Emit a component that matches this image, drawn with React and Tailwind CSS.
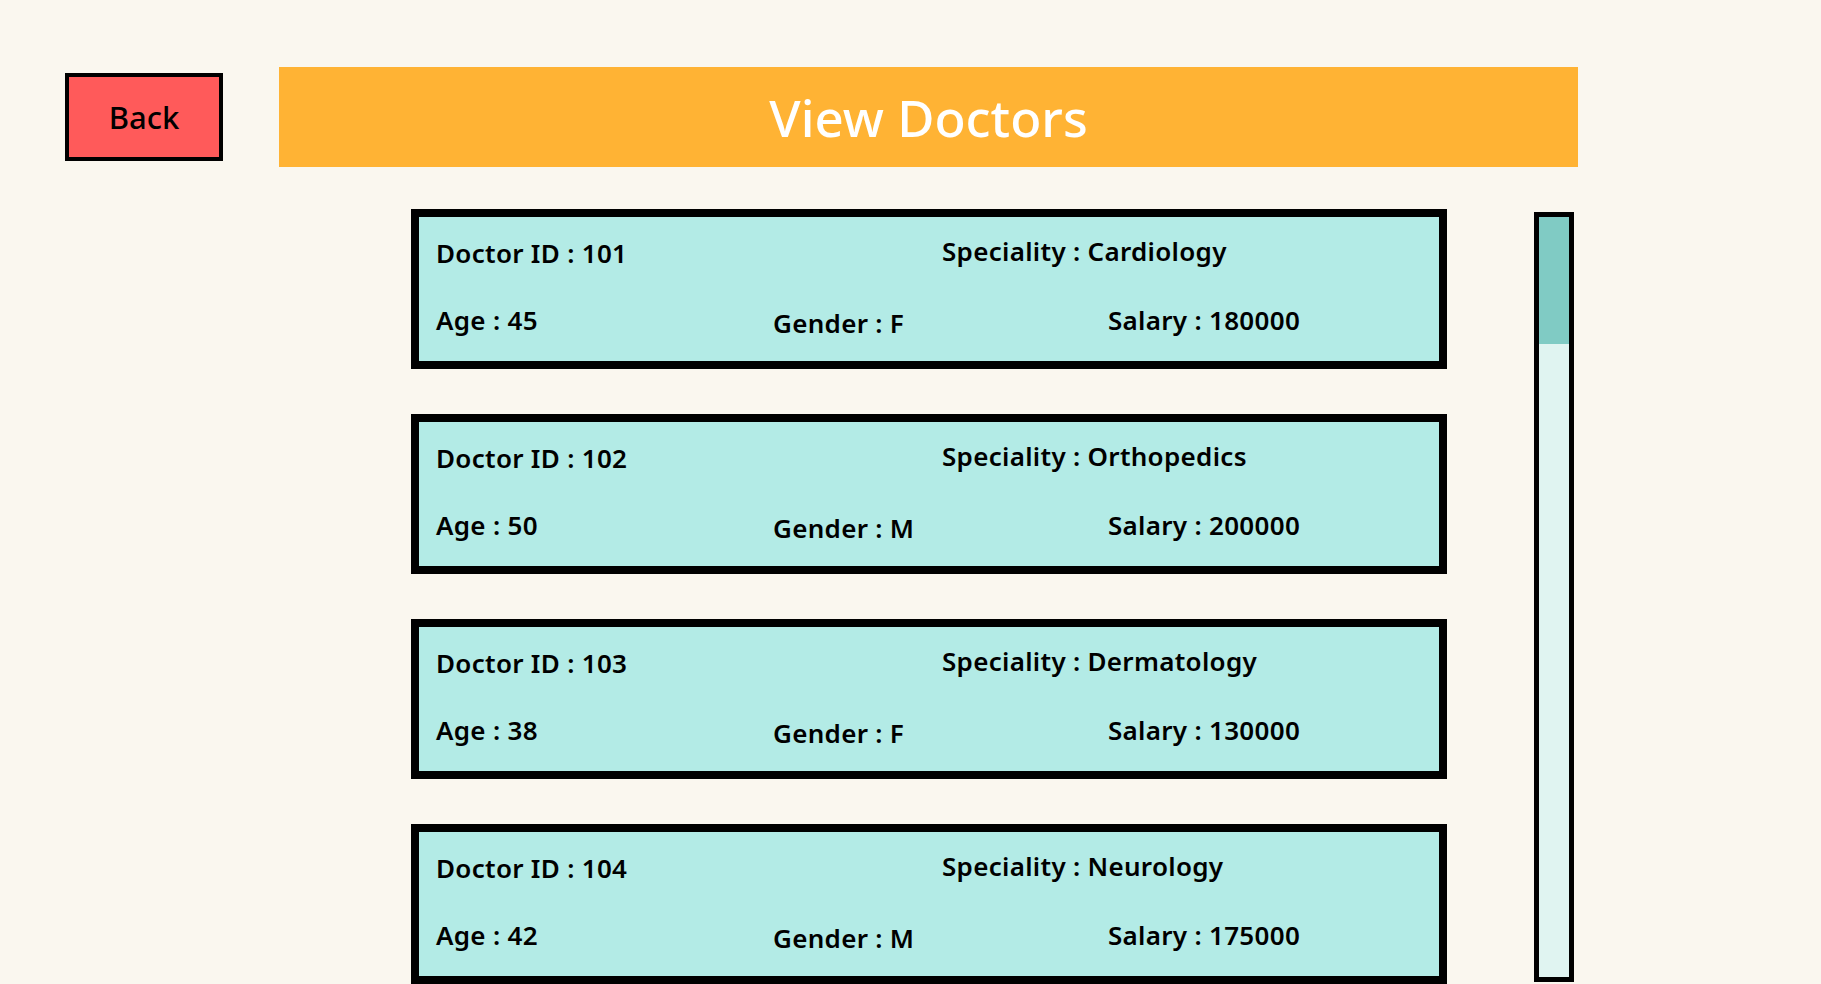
const doctors = [
  { id: 101, speciality: "Cardiology", age: 45, gender: "F", salary: 180000 },
  { id: 102, speciality: "Orthopedics", age: 50, gender: "M", salary: 200000 },
  { id: 103, speciality: "Dermatology", age: 38, gender: "F", salary: 130000 },
  { id: 104, speciality: "Neurology", age: 42, gender: "M", salary: 175000 },
];

function DoctorCard({ doc }) {
  return (
    <div className="h-[160px] shrink-0 border-8 border-black bg-[#B3EBE6] px-[17px] pt-[17px] text-[26px] font-semibold leading-[39px] tracking-[0.3px] text-black">
      <div className="flex">
        <p className="w-[506px]">Doctor ID : {doc.id}</p>
        <p className="-mt-[2px]">Speciality : {doc.speciality}</p>
      </div>
      <div className="mt-[28px] flex">
        <p className="w-[337px]">Age : {doc.age}</p>
        <p className="mt-[3px] w-[335px]">Gender : {doc.gender}</p>
        <p>Salary : {doc.salary}</p>
      </div>
    </div>
  );
}

export default function App() {
  return (
    <div
      className="flex h-screen overflow-hidden bg-[#FAF7EF]"
      style={{ fontFamily: '"Noto Sans", sans-serif' }}
    >
      {/* back button column */}
      <div className="w-[279px] shrink-0 pl-[65px] pt-[73px]">
        <button className="h-[88px] w-[158px] border-4 border-black bg-[#FF5A5A] text-[31px] font-medium text-black">
          Back
        </button>
      </div>

      <div className="flex w-[1299px] shrink-0 flex-col pt-[67px]">
        <div className="flex h-[100px] items-center justify-center bg-[#FFB334] text-[51px] font-medium text-white">
          View Doctors
        </div>

        <div className="mt-[42px] flex">
          <div className="ml-[132px] flex w-[1036px] flex-col gap-[45px]">
            {doctors.map((doc) => (
              <DoctorCard key={doc.id} doc={doc} />
            ))}
          </div>
          {/* scrollbar */}
          <div className="ml-[87px] mt-[3px] h-[770px] w-[40px] shrink-0 border-[5px] border-black bg-[#E0F4F1]">
            <div className="h-[127px] bg-[#80CBC4]"></div>
          </div>
        </div>
      </div>
    </div>
  );
}
